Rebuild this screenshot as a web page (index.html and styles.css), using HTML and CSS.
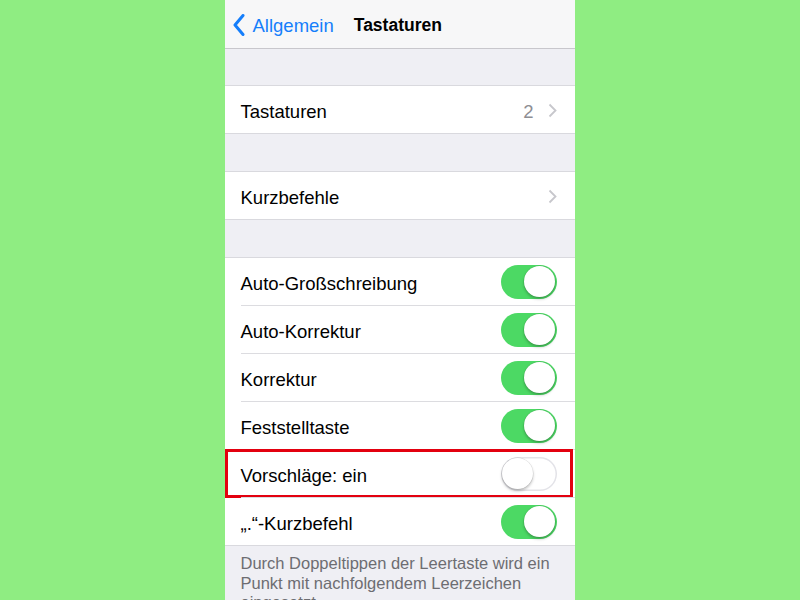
FILE: index.html
```html
<!DOCTYPE html>
<html lang="de">
<head>
    <meta charset="UTF-8">
    <meta name="viewport" content="width=device-width, initial-scale=1.0">
    <title>Tastaturen</title>
    <link rel="stylesheet" href="styles.css">
</head>
<body>
    <div class="screen">
        <header class="navbar">
            <a class="back" href="#">
                <svg class="back-icon" width="12" height="22" viewBox="0 0 12 22">
                    <path d="M10 1.5 L2 11 L10 20.5" fill="none" stroke="#157efb" stroke-width="3" stroke-linecap="round" stroke-linejoin="round"/>
                </svg>
                Allgemein
            </a>
            <div class="title">Tastaturen</div>
        </header>

        <div class="spacer first"></div>
        <div class="group">
            <div class="row">
                <span class="label">Tastaturen</span>
                <span class="value">2</span>
                <svg class="chevron" width="9" height="15" viewBox="0 0 9 15">
                    <path d="M1.5 1.5 L7.5 7.5 L1.5 13.5" fill="none" stroke="#c7c7cc" stroke-width="1.8"/>
                </svg>
            </div>
        </div>

        <div class="spacer"></div>
        <div class="group">
            <div class="row">
                <span class="label">Kurzbefehle</span>
                <svg class="chevron" width="9" height="15" viewBox="0 0 9 15">
                    <path d="M1.5 1.5 L7.5 7.5 L1.5 13.5" fill="none" stroke="#c7c7cc" stroke-width="1.8"/>
                </svg>
            </div>
        </div>

        <div class="spacer"></div>
        <div class="group">
            <div class="row">
                <span class="label">Auto-Großschreibung</span>
                <span class="switch on"></span>
            </div>
            <div class="row">
                <span class="label">Auto-Korrektur</span>
                <span class="switch on"></span>
            </div>
            <div class="row">
                <span class="label">Korrektur</span>
                <span class="switch on"></span>
            </div>
            <div class="row">
                <span class="label">Feststelltaste</span>
                <span class="switch on"></span>
            </div>
            <div class="row marked">
                <span class="label">Vorschläge: ein</span>
                <span class="switch"></span>
            </div>
            <div class="row">
                <span class="label">„.“-Kurzbefehl</span>
                <span class="switch on"></span>
            </div>
        </div>
        <p class="footnote">Durch Doppeltippen der Leertaste wird ein Punkt mit nachfolgendem Leerzeichen eingesetzt.</p>
    </div>
</body>
</html>
```

FILE: styles.css
```css
body {
    margin: 0;
    height: 600px;
    overflow: hidden;
    background-color: #8fed82;
    font-family: "Liberation Sans", Arial, sans-serif;
    display: flex;
    justify-content: center;
}

.screen {
    width: 350px;
    margin-right: 1px;
    background-color: #efeff4;
    color: #000;
}

.navbar {
    height: 49px;
    box-sizing: border-box;
    padding-top: 3px;
    background-color: #f7f7f8;
    border-bottom: 1px solid #c8c7cc;
    display: flex;
    align-items: center;
}

.back {
    display: flex;
    align-items: center;
    gap: 8px;
    padding-left: 8px;
    color: #157efb;
    text-decoration: none;
    font-size: 18.5px;
}

.back-icon {
    margin-top: -1px;
}

.title {
    margin-left: 20px;
    font-size: 17.5px;
    font-weight: bold;
}

.spacer {
    height: 36px;
}

.group {
    background-color: #fff;
    border-top: 1px solid #d9d9de;
    border-bottom: 1px solid #d9d9de;
}

.group + .spacer {
    height: 37px;
}

.row {
    height: 47px;
    display: flex;
    align-items: center;
    padding: 0 18px 0 16px;
    font-size: 18.5px;
    position: relative;
}

.row + .row {
    border-top: 1px solid #dcdce0;
    margin-left: 16px;
    padding-left: 0;
}

.label,
.value {
    padding-top: 4px;
}

.label {
    flex: 1;
}

.value {
    color: #8e8e93;
    margin-right: 14px;
}

.chevron {
    margin-top: 1px;
}

.switch {
    width: 56px;
    height: 34px;
    border-radius: 17px;
    background-color: #fff;
    box-shadow: inset 0 0 0 1.5px #e3e3e8;
    position: relative;
}

.switch::after {
    content: "";
    position: absolute;
    top: 1.5px;
    left: 1.5px;
    width: 31px;
    height: 31px;
    border-radius: 50%;
    background-color: #fff;
    box-shadow: 0 2px 3px rgba(0, 0, 0, 0.25), 0 0 0 0.5px rgba(0, 0, 0, 0.12);
}

.switch.on {
    background-color: #4cd964;
    box-shadow: none;
}

.switch.on::after {
    left: auto;
    right: 1.5px;
}

/* highlight frame round the suggestion row */
.marked::before {
    content: "";
    position: absolute;
    top: -1px;
    bottom: -1px;
    left: -16px;
    right: 2px;
    border: 3px solid #e3000f;
}

.footnote {
    margin: 0;
    padding: 8px 20px 0 16px;
    color: #6d6d72;
    font-size: 16.5px;
    line-height: 19.5px;
}
```
